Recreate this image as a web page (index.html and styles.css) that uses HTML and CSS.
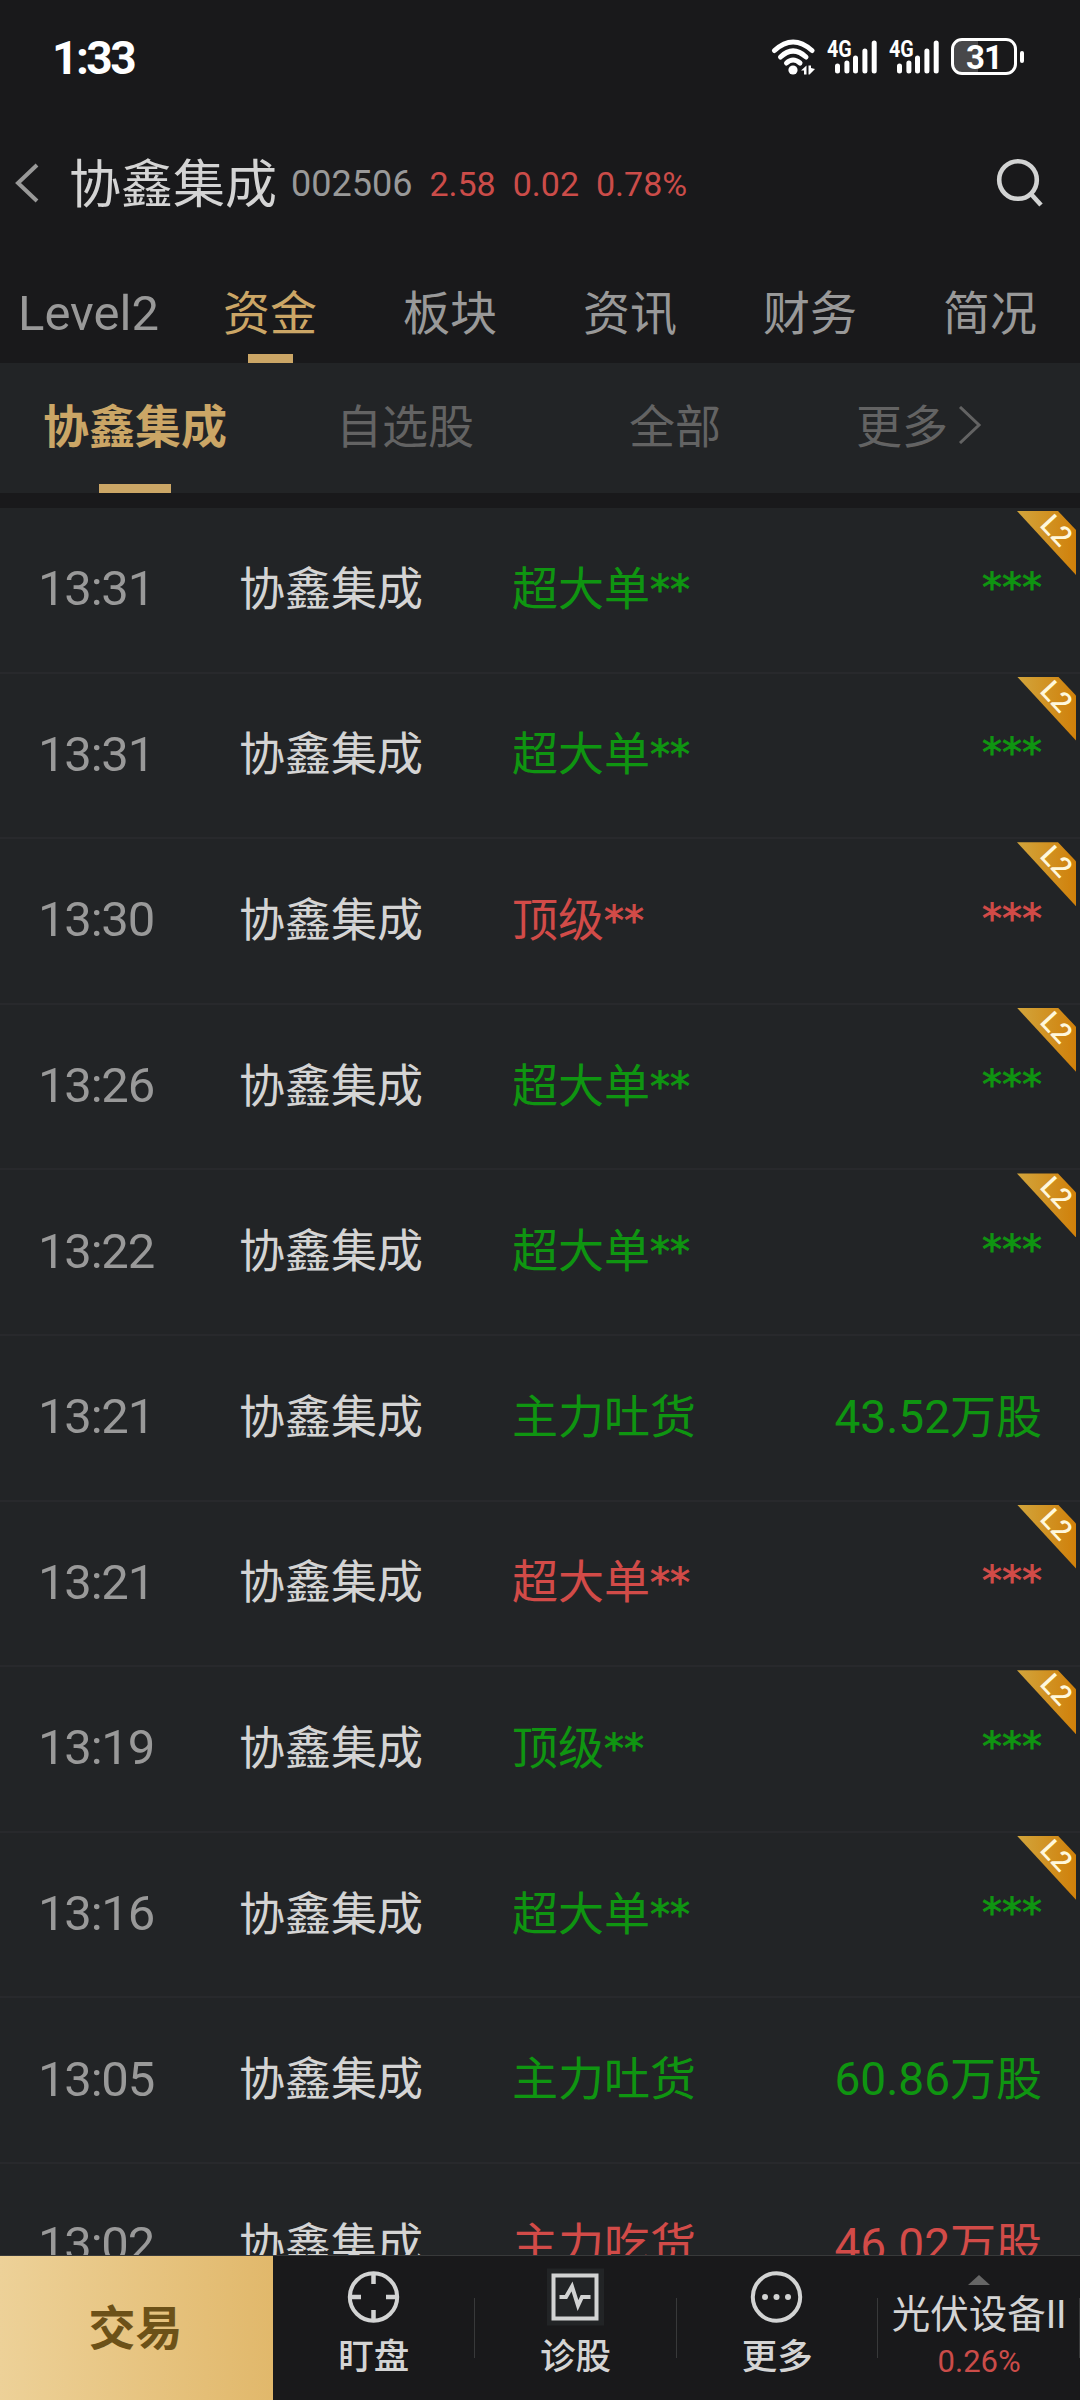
FILE: index.html
```html
<!DOCTYPE html>
<html lang="zh-CN">
<head>
  <meta charset="UTF-8" />
  <meta name="viewport" content="width=device-width, initial-scale=1.0"/>
  <title>协鑫集成 002506</title>
  <link rel="stylesheet" href="styles.css">
</head>
<body>
  <div class="app">
    <div class="status-bar">
      <span class="clock">1:33</span>
      <div class="status-icons">
        <svg class="wifi" width="46" height="36" viewBox="0 0 46 36">
          <g fill="none" stroke="#fff" stroke-width="5" stroke-linecap="round">
            <path d="M3.5 11.5Q22 -5.5 41 11.5"/>
            <path d="M9.5 18Q22 6 35 18"/>
            <path d="M15.5 24Q22 18 29 24"/>
          </g>
          <circle cx="22" cy="31" r="4.6" fill="#fff"/>
          <path d="M35.500 26.500V35.500H33V31.500H30ZM37.500 26.500H40V29L44 30L38.500 35.500H37.500Z" fill="#fff"/>
        </svg>
        <div class="signal">
          <span>4G</span>
          <svg width="42" height="34" viewBox="0 0 42 34"><path d="M2.500 26V31M11.900 23V31M20.500 18V31M29.900 11V31M39.200 3V31" stroke="#fff" stroke-width="5" stroke-linecap="round"/></svg>
        </div>
        <div class="signal">
          <span>4G</span>
          <svg width="42" height="34" viewBox="0 0 42 34"><path d="M2.500 26V31M11.900 23V31M20.500 18V31M29.900 11V31M39.200 3V31" stroke="#fff" stroke-width="5" stroke-linecap="round"/></svg>
        </div>
        <div class="battery">31</div>
        <div class="battery-cap"></div>
      </div>
    </div>

    <div class="title-bar">
      <svg class="back" width="24" height="40" viewBox="0 0 24 40"><path d="M22 2L3 20L22 38" fill="none" stroke="#999" stroke-width="4"/></svg>
      <h1>协鑫集成</h1>
      <span class="code">002506</span>
      <div class="quote">
        <span>2.58</span>
        <span>0.02</span>
        <span>0.78%</span>
      </div>
      <svg class="search" width="48" height="50" viewBox="0 0 48 50">
        <circle cx="22" cy="22" r="18.800" fill="none" stroke="#d2d3d3" stroke-width="4.600"/>
        <path d="M34.500 35.500L45 47" stroke="#d2d3d3" stroke-width="4.600"/>
      </svg>
    </div>

    <div class="tabs">
      <div class="tab latin">Level2</div>
      <div class="tab active">资金</div>
      <div class="tab">板块</div>
      <div class="tab">资讯</div>
      <div class="tab">财务</div>
      <div class="tab">简况</div>
    </div>

    <div class="sub-tabs">
      <div class="sub-tab active">协鑫集成</div>
      <div class="sub-tab">自选股</div>
      <div class="sub-tab">全部</div>
      <div class="sub-tab more">更多
        <svg width="24" height="38" viewBox="0 0 24 38"><path d="M2 1L21 19L2 37" fill="none" stroke="#636363" stroke-width="3"/></svg>
      </div>
    </div>

    <div class="list" id="list"></div>

    <div class="bottom-bar">
      <div class="trade">交易</div>
      <div class="nav-item">
        <svg width="58" height="58" viewBox="0 0 58 58" fill="none" stroke="#d2d3d3" stroke-width="4">
          <circle cx="28.500" cy="29" r="23.700"/>
          <path d="M28.500 5V16M28.500 42V53M4.500 29H16M41 29H52.500" stroke-width="4.500"/>
        </svg>
        <span>盯盘</span>
      </div>
      <div class="nav-item">
        <svg width="58" height="58" viewBox="0 0 58 58" fill="none" stroke="#d2d3d3" stroke-width="4">
          <rect x="0" y="0.500" width="57" height="57" fill="#222426" stroke="none"/>
          <rect x="6.500" y="7.500" width="43" height="43"/>
          <path d="M12.500 29H19L25 18.500L31 37.500L35 29H43.500"/>
        </svg>
        <span>诊股</span>
      </div>
      <div class="nav-item">
        <svg width="58" height="58" viewBox="0 0 58 58" fill="none" stroke="#d2d3d3" stroke-width="4">
          <circle cx="28.500" cy="29" r="23.700"/>
          <g fill="#d2d3d3" stroke="none"><circle cx="17" cy="29" r="3"/><circle cx="28.500" cy="29" r="3"/><circle cx="40" cy="29" r="3"/></g>
        </svg>
        <span>更多</span>
      </div>
      <div class="nav-item sector">
        <i class="arrow-up"></i>
        <span class="sector-name">光伏设备II</span>
        <span class="sector-rate">0.26%</span>
      </div>
    </div>
  </div>

  <script>
    const rows = [
      { time: '13:31', type: '超大单**', value: '***', color: 'green', l2: true },
      { time: '13:31', type: '超大单**', value: '***', color: 'green', l2: true },
      { time: '13:30', type: '顶级**', value: '***', color: 'red', l2: true },
      { time: '13:26', type: '超大单**', value: '***', color: 'green', l2: true },
      { time: '13:22', type: '超大单**', value: '***', color: 'green', l2: true },
      { time: '13:21', type: '主力吐货', value: '43.52万股', color: 'green' },
      { time: '13:21', type: '超大单**', value: '***', color: 'red', l2: true },
      { time: '13:19', type: '顶级**', value: '***', color: 'green', l2: true },
      { time: '13:16', type: '超大单**', value: '***', color: 'green', l2: true },
      { time: '13:05', type: '主力吐货', value: '60.86万股', color: 'green' },
      { time: '13:02', type: '主力吃货', value: '46.02万股', color: 'red' }
    ];

    const stars = text => text.replace(/\*+/, s => `<span class="stars">${s}</span>`);

    document.getElementById('list').innerHTML = rows.map(row => `
      <div class="row ${row.color}">
        <span class="time">${row.time}</span>
        <span class="name">协鑫集成</span>
        <span class="type">${stars(row.type)}</span>
        <span class="value ${row.l2 ? 'hidden-value' : ''}">${stars(row.value)}</span>
        ${row.l2 ? '<div class="badge"><span>L2</span></div>' : ''}
      </div>
    `).join('');
  </script>
</body>
</html>
```
FILE: styles.css
```css
* {
  margin: 0;
  padding: 0;
  box-sizing: border-box;
}
body {
  background: #19191b;
  font-family: Roboto, "Noto Sans CJK SC", sans-serif;
  color: #d4d4d4;
}
.app {
  display: flex;
  flex-direction: column;
  width: 1080px;
  height: 2400px;
  overflow: hidden;
}

/* status bar */
.status-bar {
  height: 112px;
  padding: 1px 56px 0 52px;
  display: flex;
  justify-content: space-between;
  align-items: center;
  color: #fff;
}
.clock {
  padding-top: 3px;
  font-size: 46px;
  font-weight: 700;
  line-height: 60px;
  letter-spacing: -2.5px;
}
.status-icons {
  display: flex;
  align-items: center;
}
.wifi {
  margin-right: 10px;
}
.signal {
  position: relative;
  width: 49px;
  height: 34px;
  margin-right: 13px;
}
.signal svg {
  display: block;
  margin-left: 8px;
}
.signal span {
  position: absolute;
  left: 0;
  top: -2px;
  font-size: 24px;
  font-weight: 700;
  line-height: 23px;
  transform: scaleX(0.82);
  transform-origin: left;
}
.battery {
  width: 66px;
  height: 37px;
  border: 3px solid #fff;
  border-radius: 11px;
  background: linear-gradient(90deg, #48484a 24px, transparent 24px);
  font-size: 33px;
  font-weight: 700;
  line-height: 33px;
  letter-spacing: -1px;
  text-align: center;
}
.battery-cap {
  width: 4px;
  height: 12px;
  margin-left: 3px;
  border-radius: 2px;
  background: #fff;
}

/* title */
.title-bar {
  height: 142px;
  padding: 0 36px 0 15px;
  display: flex;
  align-items: center;
}
.title-bar h1 {
  margin-left: 30px;
  margin-top: -6px;
  font-size: 52px;
  font-weight: 400;
}
.code {
  margin-left: 14px;
  padding-top: 2px;
  font-size: 36px;
  color: #999;
}
.quote {
  display: flex;
  gap: 17px;
  margin-left: 17px;
  padding-top: 2px;
  font-size: 34px;
  color: #cb4c49;
}
.search {
  margin-left: auto;
}

/* tabs */
.tabs {
  height: 109px;
  display: grid;
  grid-template-columns: repeat(6, 180px);
}
.tab,
.sub-tab {
  position: relative;
  display: flex;
  align-items: center;
  justify-content: center;
}
.tab {
  padding-top: 1px;
  font-size: 47px;
  color: #999;
}
.tab.latin {
  padding: 9px 3px 0 0;
  font-size: 49px;
}
.tab.active,
.sub-tab.active {
  color: #cba666;
}
.tab.active::after,
.sub-tab.active::after {
  content: "";
  position: absolute;
  bottom: 0;
  width: 45px;
  height: 9px;
  background: #cba666;
}
.sub-tabs {
  height: 130px;
  display: grid;
  grid-template-columns: repeat(4, 270px);
  background: #222426;
}
.sub-tab {
  padding-bottom: 11px;
  font-size: 46px;
  color: #636363;
}
.sub-tab.active {
  font-weight: 700;
}
.sub-tab.active::after {
  width: 72px;
}
.sub-tab.more {
  gap: 10px;
  padding-right: 52px;
}
.sub-tab.more svg {
  margin-top: 4px;
}

/* money flow list */
.list {
  flex: 1;
  min-height: 0;
  margin-top: 15px;
  overflow: hidden;
  background: #222426;
}
.row {
  position: relative;
  height: 165.600px;
  padding: 0 38px 10px 38px;
  display: grid;
  grid-template-columns: 201px 273px 1fr auto;
  align-items: center;
  border-bottom: 2px solid #28292c;
  font-size: 46px;
}
.time {
  padding-top: 8px;
  font-size: 49px;
  letter-spacing: -1.2px;
  color: #999;
}
.name {
  color: #d4d4d4;
}
.green {
  color: #0f9511;
}
.red {
  color: #d24b48;
}
.stars {
  position: relative;
  top: -1px;
  font-family: "DejaVu Sans", sans-serif;
  font-size: 40px;
  line-height: 1;
  -webkit-text-stroke: 0.8px currentColor;
}
.hidden-value {
  padding-top: 4px;
}
.badge {
  position: absolute;
  top: 3px;
  right: 4px;
  width: 59px;
  height: 64px;
  background: linear-gradient(90deg, #d2a53c, #d0800a);
  clip-path: polygon(0 0, 41px 0, 59px 19px, 59px 64px);
}
.badge span {
  position: absolute;
  left: 19px;
  top: 4px;
  width: 40px;
  font-size: 28px;
  font-weight: 500;
  line-height: 32px;
  text-align: center;
  color: #fff8dc;
  transform: rotate(47deg);
}

/* bottom bar */
.bottom-bar {
  height: 145px;
  display: flex;
  border-top: 1px solid #38393a;
}
.trade {
  width: 273px;
  padding: 0 2px 8px 0;
  display: flex;
  align-items: center;
  justify-content: center;
  background: linear-gradient(90deg, #edd198, #e1b86b);
  color: #6c5118;
  font-size: 47px;
  font-weight: 700;
}
.nav-item {
  position: relative;
  flex: 1;
  padding-top: 12px;
  display: flex;
  flex-direction: column;
  align-items: center;
  font-size: 35.5px;
  font-weight: 500;
  line-height: 50px;
}
.nav-item::after {
  content: "";
  position: absolute;
  right: 0;
  top: 42px;
  width: 1px;
  height: 60px;
  background: #38393a;
}
.nav-item svg {
  margin-bottom: 6px;
}
.arrow-up {
  margin-top: 7px;
  border: 11px solid transparent;
  border-top: 0;
  border-bottom: 10px solid #666;
}
.sector-name {
  margin-top: 5px;
  font-size: 38.500px;
  font-weight: 400;
  white-space: nowrap;
}
.sector-rate {
  margin-top: -3px;
  font-size: 31px;
  font-weight: 400;
  color: #cb4c49;
}
```
